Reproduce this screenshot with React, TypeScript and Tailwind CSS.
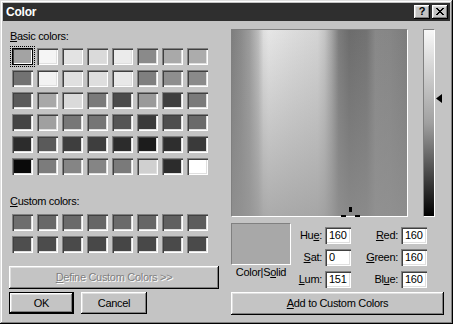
import React from "react";

const basic: string[][] = [
  ["#a3a3a3", "#f5f5f5", "#e3e3e3", "#dadada", "#ebebeb", "#8a8a8a", "#a9a9a9", "#acacac"],
  ["#727272", "#f2f2f2", "#e0e0e0", "#dedede", "#e8e8e8", "#7f7f7f", "#8e8e8e", "#8a8a8a"],
  ["#5a5a5a", "#a8a8a8", "#dadada", "#7a7a7a", "#4a4a4a", "#9a9a9a", "#3e3e3e", "#7a7a7a"],
  ["#444444", "#a0a0a0", "#777777", "#757575", "#555555", "#3a3a3a", "#4e4e4e", "#6a6a6a"],
  ["#2c2c2c", "#5a5a5a", "#3e3e3e", "#3e3e3e", "#2c2c2c", "#1c1c1c", "#2e2e2e", "#3a3a3a"],
  ["#0a0a0a", "#7c7c7c", "#858585", "#858585", "#7a7a7a", "#d0d0d0", "#2c2c2c", "#ffffff"],
];

const custom: string[][] = [
  ["#6e6e6e", "#686868", "#6a6a6a", "#666666", "#6a6a6a", "#666666", "#606060", "#5c5c5c"],
  ["#4e4e4e", "#4c4c4c", "#4a4a4a", "#484848", "#464646", "#484848", "#4a4a4a", "#4a4a4a"],
];

const sunken =
  "shadow-[inset_1px_1px_0_#808080,inset_2px_2px_0_#404040,inset_-1px_-1px_0_#ffffff,inset_-2px_-2px_0_#dfdfdf]";
const raised =
  "shadow-[inset_-1px_-1px_0_#000000,inset_1px_1px_0_#ffffff,inset_-2px_-2px_0_#808080,inset_2px_2px_0_#dfdfdf]";

function Swatch({ color, selected }: { color: string; selected?: boolean }) {
  if (selected) {
    return (
      <div
        className="w-[21px] h-[17px] outline-1 outline-dotted outline-black outline-offset-1 shadow-[inset_0_0_0_1px_#000000,inset_2px_2px_0_#404040,inset_-2px_-2px_0_#ffffff]"
        style={{ backgroundColor: color }}
      />
    );
  }
  return <div className={`w-[21px] h-[17px] ${sunken}`} style={{ backgroundColor: color }} />;
}

function Field({ value }: { value: string }) {
  return (
    <div className={`w-[26px] h-[17px] bg-white pl-[4px] pt-[2px] leading-[13px] ${sunken}`}>{value}</div>
  );
}

export default function App() {
  return (
    <div className="w-[453px] h-[324px] bg-[#c4c4c4] p-[3px] flex flex-col text-[11px] leading-[13px] text-black font-['Liberation_Sans',Arial,sans-serif] tracking-[-0.3px] shadow-[inset_-1px_-1px_0_#000000,inset_1px_1px_0_#dfdfdf,inset_-2px_-2px_0_#808080,inset_2px_2px_0_#ffffff]">
      {/* Title bar */}
      <div className="h-[18px] bg-[#2f2f2f] flex items-center pl-[3px] pr-[2px]">
        <span className="text-white font-bold text-[12px] tracking-[-0.2px] flex-1">Color</span>
        <div className={`w-[16px] h-[14px] bg-[#c4c4c4] ${raised} flex items-center justify-center font-bold text-[11px] tracking-normal pb-[1px]`}>
          ?
        </div>
        <div className={`ml-[2px] w-[16px] h-[14px] bg-[#c4c4c4] ${raised} flex items-center justify-center pb-[1px]`}>
          <svg width="8" height="7" viewBox="0 0 8 7" shapeRendering="crispEdges">
            <path d="M0 0h2v1h1v1h2V1h1V0h2v1H7v1H6v1H5v1h1v1h1v1h1v1H6V6H5V5H3v1H2v1H0V6h1V5h1V4h1V3H2V2H1V1H0z" fill="#000" />
          </svg>
        </div>
      </div>

      {/* Body */}
      <div className="flex flex-1 pl-[6px]">
        {/* Left column */}
        <div className="w-[210px] flex flex-col">
          <div className="ml-[1px] mt-[9px] h-[13px]">
            <span className="underline">B</span>asic colors:
          </div>
          <div className="mt-[5px] ml-[3px] grid grid-cols-[repeat(8,21px)] gap-x-[4px] gap-y-[5px]">
            {basic.flatMap((row, r) =>
              row.map((c, i) => <Swatch key={`b${r}-${i}`} color={c} selected={r === 0 && i === 0} />)
            )}
          </div>
          <div className="ml-[1px] mt-[20px] h-[13px]">
            <span className="underline">C</span>ustom colors:
          </div>
          <div className="mt-[6px] ml-[3px] grid grid-cols-[repeat(8,21px)] gap-x-[4px] gap-y-[5px]">
            {custom.flatMap((row, r) => row.map((c, i) => <Swatch key={`c${r}-${i}`} color={c} />))}
          </div>
          <div
            className={`mt-[13px] h-[23px] w-[210px] bg-[#c4c4c4] ${raised} flex items-center justify-center text-[#808080] [text-shadow:1px_1px_0_#ffffff]`}
          >
            <span>
              <span className="underline">D</span>efine Custom Colors &gt;&gt;
            </span>
          </div>
          <div className="mt-[3px] flex">
            <div className="w-[65px] h-[22px] border border-black bg-[#c4c4c4] flex">
              <div className={`flex-1 ${raised} flex items-center justify-center`}>OK</div>
            </div>
            <div className={`ml-[7px] w-[66px] h-[22px] bg-[#c4c4c4] ${raised} flex items-center justify-center`}>
              Cancel
            </div>
          </div>
        </div>

        {/* Right column */}
        <div className="ml-[12px] flex flex-col">
          <div className="mt-[8px] flex">
            <div className="relative w-[177px] h-[188px] border-t border-l border-t-[#808080] border-l-[#808080] border-b border-r border-b-white border-r-white bg-[image:linear-gradient(to_bottom,rgba(148,148,148,0)_0%,rgba(148,148,148,0.72)_100%),linear-gradient(to_right,#7e7e7e_0%,#8a8a8a_5%,#9c9c9c_10%,#bcbcbc_15%,#dedede_18%,#e6e6e6_21%,#dcdcdc_35%,#d4d4d4_49%,#c4c4c4_53%,#a4a4a4_57%,#7c7c7c_61%,#6c6c6c_67%,#727272_77%,#888888_82%,#868686_90%,#7c7c7c_100%)]">
              <div className="absolute left-[117px] top-[177px] w-[3px] h-[5px] bg-black" />
              <div className="absolute left-[109px] top-[185px] w-[5px] h-[2px] bg-black" />
              <div className="absolute left-[123px] top-[185px] w-[5px] h-[2px] bg-black" />
            </div>
            <div className="ml-[15px] relative w-[12px] h-[188px] border-t border-l border-t-[#808080] border-l-[#808080] border-b border-r border-b-white border-r-white bg-[linear-gradient(to_bottom,#f8f8f8_0%,#a0a0a0_50%,#000000_100%)]">
              <svg className="absolute left-[12px] top-[64px]" width="6" height="9" viewBox="0 0 6 9">
                <polygon points="6,0 0,4.5 6,9" fill="#000" />
              </svg>
            </div>
          </div>

          <div className="mt-[6px] flex">
            <div className="w-[60px] flex flex-col items-center">
              <div className="w-[60px] h-[42px] bg-[#a8a8a8] border-t border-l border-t-[#808080] border-l-[#808080] border-b border-r border-b-white border-r-white" />
              <div className="mt-[1px] h-[13px] text-center">
                Color|S<span className="underline">o</span>lid
              </div>
            </div>
            <div className="pt-[4px] grid grid-cols-[34px_26px_50px_26px] gap-y-[5px] items-center">
              <div className="text-right pr-[3px]">
                Hu<span className="underline">e</span>:
              </div>
              <Field value="160" />
              <div className="text-right pr-[3px]">
                <span className="underline">R</span>ed:
              </div>
              <Field value="160" />
              <div className="text-right pr-[3px]">
                <span className="underline">S</span>at:
              </div>
              <Field value="0" />
              <div className="text-right pr-[3px]">
                <span className="underline">G</span>reen:
              </div>
              <Field value="160" />
              <div className="text-right pr-[3px]">
                <span className="underline">L</span>um:
              </div>
              <Field value="151" />
              <div className="text-right pr-[3px]">
                Bl<span className="underline">u</span>e:
              </div>
              <Field value="160" />
            </div>
          </div>

          <div className={`mt-[4px] w-[213px] h-[23px] bg-[#c4c4c4] ${raised} flex items-center justify-center`}>
            <span>
              <span className="underline">A</span>dd to Custom Colors
            </span>
          </div>
        </div>
      </div>
    </div>
  );
}
